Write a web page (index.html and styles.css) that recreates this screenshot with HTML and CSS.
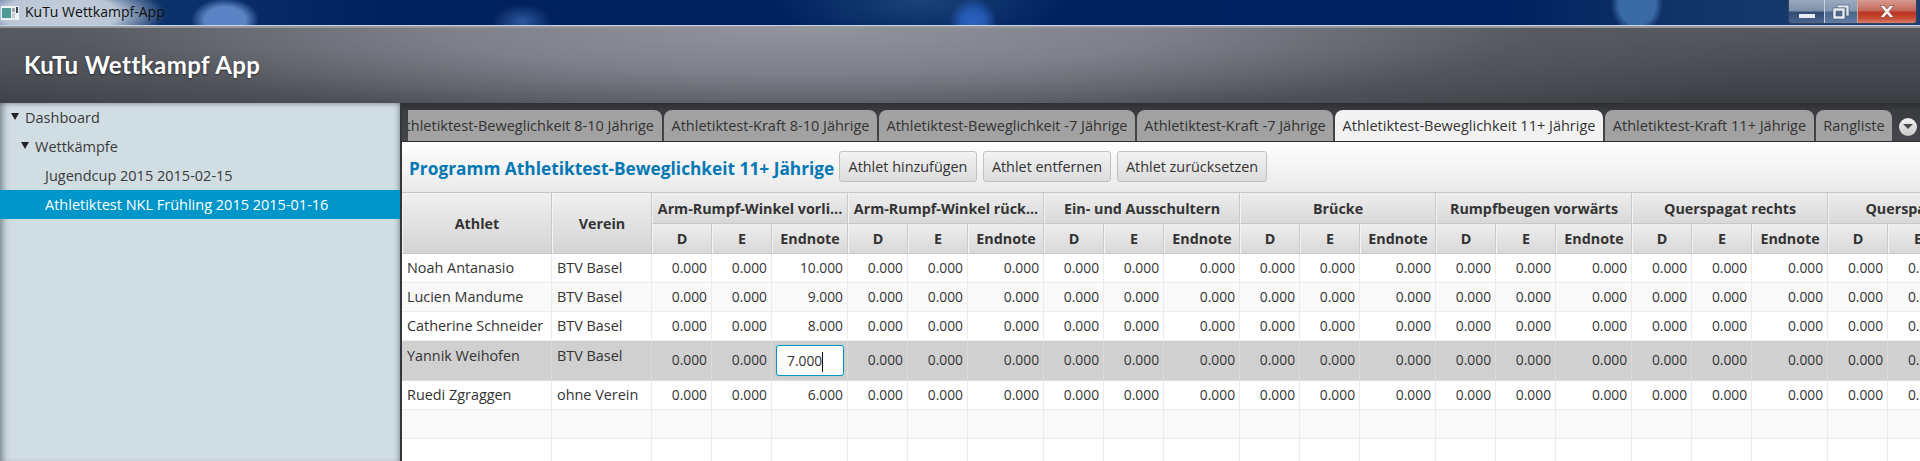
FILE: index.html
```html
<!DOCTYPE html>
<html>

<head>
	<meta charset="utf-8">
	<title>KuTu Wettkampf-App</title>
	<link rel="stylesheet" href="styles.css">
</head>

<body>
	<div class="titleBar">
		<svg class="appIcon" width="18" height="14" viewBox="0 0 18 14">
			<rect width="18" height="14" fill="#eef2f4" />
			<rect x="1" y="2" width="9" height="10" fill="#4f9a96" />
			<rect x="11" y="2" width="3" height="4" fill="#9aa6ae" />
			<rect x="11" y="7" width="3" height="5" fill="#c4ccd0" />
			<rect x="15" y="1" width="2" height="6" fill="#3c4a56" />
		</svg>
		<span class="windowTitle">KuTu Wettkampf-App</span>
		<div class="windowButtons">
			<div class="winBtn minBtn"><span class="minBar"></span></div>
			<div class="winBtn restoreBtn">
				<svg width="18" height="16" viewBox="0 0 18 16">
					<path d="M5 1h12v11h-3v-8h-9z" fill="#dfe6ee" stroke="#47586e" stroke-width="0.6" />
					<path d="M1 4h12v11h-12z M4 7v5h6v-5z" fill="#e8edf3" fill-rule="evenodd" stroke="#47586e" stroke-width="0.6" />
				</svg>
			</div>
			<div class="winBtn closeBtn">
				<svg width="16" height="13" viewBox="0 0 16 13">
					<path d="M1 0.5h4l3 3.5 3-3.5h4l-5 6 5 6h-4l-3-3.5-3 3.5h-4l5-6z" fill="#f2f2f2" stroke="#6d2a22" stroke-width="0.5" />
				</svg>
			</div>
		</div>
	</div>

	<div class="appHeader">
		<h1 class="appName">KuTu Wettkampf App</h1>
	</div>

	<div class="mainArea">
		<div class="sideTree">
			<div class="treeRow level0"><span class="treeArrow"></span>Dashboard</div>
			<div class="treeRow level1"><span class="treeArrow"></span>Wettkämpfe</div>
			<div class="treeRow level2">Jugendcup 2015 2015-02-15</div>
			<div class="treeRow level2 selected">Athletiktest NKL Frühling 2015 2015-01-16</div>
		</div>

		<div class="content">
			<div class="tabStrip">
				<div class="tab tabClipped"><span>Athletiktest-Beweglichkeit 8-10 Jährige</span></div>
				<div class="tab tabB"><span>Athletiktest-Kraft 8-10 Jährige</span></div>
				<div class="tab tabC"><span>Athletiktest-Beweglichkeit -7 Jährige</span></div>
				<div class="tab tabD"><span>Athletiktest-Kraft -7 Jährige</span></div>
				<div class="tab tabE active"><span>Athletiktest-Beweglichkeit 11+ Jährige</span></div>
				<div class="tab tabF"><span>Athletiktest-Kraft 11+ Jährige</span></div>
				<div class="tab tabG"><span>Rangliste</span></div>
				<div class="tabMenu"><span class="tabMenuArrow"></span></div>
			</div>

			<div class="toolBar">
				<h2 class="programTitle">Programm Athletiktest-Beweglichkeit 11+ Jährige</h2>
				<button class="toolButton btnAdd">Athlet hinzufügen</button>
				<button class="toolButton btnRemove">Athlet entfernen</button>
				<button class="toolButton btnReset">Athlet zurücksetzen</button>
			</div>

			<div class="tableWrap">
				<table class="scoreTable">
					<colgroup>
						<col class="colName"><col class="colClub">
						<col class="colNum"><col class="colNum"><col class="colEnd">
						<col class="colNum"><col class="colNum"><col class="colEnd">
						<col class="colNum"><col class="colNum"><col class="colEnd">
						<col class="colNum"><col class="colNum"><col class="colEnd">
						<col class="colNum"><col class="colNum"><col class="colEnd">
						<col class="colNum"><col class="colNum"><col class="colEnd">
						<col class="colNum"><col class="colNum"><col class="colEnd">
					</colgroup>
					<thead>
						<tr class="groupRow">
							<th rowspan="2">Athlet</th>
							<th rowspan="2">Verein</th>
							<th colspan="3">Arm-Rumpf-Winkel vorli...</th>
							<th colspan="3">Arm-Rumpf-Winkel rück...</th>
							<th colspan="3">Ein- und Ausschultern</th>
							<th colspan="3">Brücke</th>
							<th colspan="3">Rumpfbeugen vorwärts</th>
							<th colspan="3">Querspagat rechts</th>
							<th colspan="3">Querspagat links</th>
						</tr>
						<tr class="subRow">
							<th>D</th><th>E</th><th>Endnote</th>
							<th>D</th><th>E</th><th>Endnote</th>
							<th>D</th><th>E</th><th>Endnote</th>
							<th>D</th><th>E</th><th>Endnote</th>
							<th>D</th><th>E</th><th>Endnote</th>
							<th>D</th><th>E</th><th>Endnote</th>
							<th>D</th><th>E</th><th>Endnote</th>
						</tr>
					</thead>
					<tbody>
						<tr>
							<td class="txt">Noah Antanasio</td><td class="txt">BTV Basel</td>
							<td>0.000</td><td>0.000</td><td>10.000</td>
							<td>0.000</td><td>0.000</td><td>0.000</td>
							<td>0.000</td><td>0.000</td><td>0.000</td>
							<td>0.000</td><td>0.000</td><td>0.000</td>
							<td>0.000</td><td>0.000</td><td>0.000</td>
							<td>0.000</td><td>0.000</td><td>0.000</td>
							<td>0.000</td><td>0.000</td><td>0.000</td>
						</tr>
						<tr class="odd">
							<td class="txt">Lucien Mandume</td><td class="txt">BTV Basel</td>
							<td>0.000</td><td>0.000</td><td>9.000</td>
							<td>0.000</td><td>0.000</td><td>0.000</td>
							<td>0.000</td><td>0.000</td><td>0.000</td>
							<td>0.000</td><td>0.000</td><td>0.000</td>
							<td>0.000</td><td>0.000</td><td>0.000</td>
							<td>0.000</td><td>0.000</td><td>0.000</td>
							<td>0.000</td><td>0.000</td><td>0.000</td>
						</tr>
						<tr>
							<td class="txt">Catherine Schneider</td><td class="txt">BTV Basel</td>
							<td>0.000</td><td>0.000</td><td>8.000</td>
							<td>0.000</td><td>0.000</td><td>0.000</td>
							<td>0.000</td><td>0.000</td><td>0.000</td>
							<td>0.000</td><td>0.000</td><td>0.000</td>
							<td>0.000</td><td>0.000</td><td>0.000</td>
							<td>0.000</td><td>0.000</td><td>0.000</td>
							<td>0.000</td><td>0.000</td><td>0.000</td>
						</tr>
						<tr class="editing">
							<td class="txt">Yannik Weihofen</td><td class="txt">BTV Basel</td>
							<td>0.000</td><td>0.000</td><td class="editCell"><div class="editBox">7.000<span class="caret"></span></div></td>
							<td>0.000</td><td>0.000</td><td>0.000</td>
							<td>0.000</td><td>0.000</td><td>0.000</td>
							<td>0.000</td><td>0.000</td><td>0.000</td>
							<td>0.000</td><td>0.000</td><td>0.000</td>
							<td>0.000</td><td>0.000</td><td>0.000</td>
							<td>0.000</td><td>0.000</td><td>0.000</td>
						</tr>
						<tr>
							<td class="txt">Ruedi Zgraggen</td><td class="txt">ohne Verein</td>
							<td>0.000</td><td>0.000</td><td>6.000</td>
							<td>0.000</td><td>0.000</td><td>0.000</td>
							<td>0.000</td><td>0.000</td><td>0.000</td>
							<td>0.000</td><td>0.000</td><td>0.000</td>
							<td>0.000</td><td>0.000</td><td>0.000</td>
							<td>0.000</td><td>0.000</td><td>0.000</td>
							<td>0.000</td><td>0.000</td><td>0.000</td>
						</tr>
						<tr class="odd">
							<td></td><td></td><td></td><td></td><td></td><td></td><td></td><td></td><td></td><td></td><td></td><td></td>
							<td></td><td></td><td></td><td></td><td></td><td></td><td></td><td></td><td></td><td></td><td></td>
						</tr>
						<tr>
							<td></td><td></td><td></td><td></td><td></td><td></td><td></td><td></td><td></td><td></td><td></td><td></td>
							<td></td><td></td><td></td><td></td><td></td><td></td><td></td><td></td><td></td><td></td><td></td>
						</tr>
					</tbody>
				</table>
			</div>
		</div>
	</div>
</body>

</html>
```

FILE: styles.css
```css
* {
	box-sizing: border-box;
}

html,
body {
	margin: 0;
	height: 461px;
	overflow: hidden;
}

body {
	display: flex;
	flex-direction: column;
	width: 1920px;
	background-color: #3c3e44;
	font-family: "Open Sans", "Noto Sans", sans-serif;
	font-size: 14.5px;
	color: #333333;
}

/* window frame */
.titleBar {
	display: flex;
	align-items: center;
	height: 26px;
	flex: none;
	padding: 0 0 2px 1px;
	border-bottom: 1px solid #c9d6e6;
	background:
		radial-gradient(ellipse 105px 34px at 60px 14px, #c5cfdc 0%, #bac6d6 55%, rgba(186, 198, 214, 0) 100%),
		radial-gradient(ellipse 34px 22px at 225px 20px, #5a84c4 0%, #5a84c4 60%, rgba(90, 132, 196, 0) 100%),
		radial-gradient(ellipse 30px 18px at 522px 22px, #2e5a9e 0%, rgba(46, 90, 158, 0) 100%),
		radial-gradient(ellipse 24px 24px at 973px 22px, #2c62c0 0%, #2458b0 50%, rgba(36, 88, 176, 0) 100%),
		radial-gradient(ellipse 150px 50px at 920px 0, #1a4378 0%, rgba(26, 67, 120, 0) 100%),
		radial-gradient(ellipse 26px 30px at 1637px 4px, #3a6aa6 0%, #3a6aa6 70%, rgba(58, 106, 166, 0) 100%),
		linear-gradient(to right, #143d75 0, #00215c 400px, #002160 1500px, #123569 1700px, #1c3f70 1920px);
}

.appIcon {
	flex: none;
	margin-top: 2px;
}

.windowTitle {
	margin-left: 6px;
	font-size: 14px;
	color: #101010;
}

.windowButtons {
	display: flex;
	height: 24px;
	margin-left: auto;
	margin-right: 3px;
	align-self: flex-start;
	border: 1px solid #33435c;
	border-top: 0;
	border-radius: 0 0 4px 4px;
	overflow: hidden;
}

.winBtn {
	display: flex;
	align-items: center;
	justify-content: center;
	height: 100%;
}

.minBtn {
	width: 36px;
	border-right: 1px solid #c4d0de;
	background: linear-gradient(to bottom, #9aa9bf 0, #7f92ad 45%, #314a72 55%, #4a6690 100%);
}

.minBar {
	display: block;
	width: 16px;
	height: 4px;
	margin-top: 8px;
	background-color: #e8edf3;
}

.restoreBtn {
	width: 33px;
	border-right: 1px solid #c4a8a4;
	background: linear-gradient(to bottom, #9aa9bf 0, #8598b3 45%, #4b658b 55%, #617ea6 100%);
}

.closeBtn {
	width: 58px;
	background: linear-gradient(to bottom, #d89a90 0, #c46a5c 45%, #bb3420 55%, #c84c36 80%, #d4806e 100%);
}

/* app header */
.appHeader {
	flex: none;
	display: flex;
	align-items: center;
	height: 77px;
	padding: 0 0 2px 24px;
	border-top: 2px solid #96979c;
	background:
		radial-gradient(ellipse 1050px 130px at 800px 0, #92959d 0%, #7d8089 35%, rgba(90, 92, 100, 0.6) 70%, rgba(60, 62, 68, 0) 100%),
		linear-gradient(to bottom, #55575e 0, #3c3e43 100%);
}

.appName {
	margin: 0;
	font-family: "Lato", sans-serif;
	font-size: 24px;
	font-weight: 700;
	letter-spacing: 0.45px;
	color: #ffffff;
	text-shadow: 0 1px 2px rgba(0, 0, 0, 0.5);
}

.mainArea {
	flex: 1;
	display: flex;
	min-height: 0;
}

/* navigation tree */
.sideTree {
	flex: none;
	width: 400px;
	background-color: #d0dde3;
	box-shadow: inset 7px 0 6px -4px rgba(60, 70, 80, 0.55), inset -5px 0 5px -4px rgba(60, 70, 80, 0.5), inset 0 5px 5px -4px rgba(60, 70, 80, 0.4);
}

.treeRow {
	display: flex;
	align-items: center;
	height: 29px;
	white-space: nowrap;
	color: #3a3a3a;
}

.level0 {
	padding-left: 11px;
}

.level1 {
	padding-left: 21px;
}

.level2 {
	padding-left: 45px;
}

.treeRow.selected {
	background-color: #0096c9;
	color: #ffffff;
}

.treeArrow {
	width: 0;
	height: 0;
	margin-right: 6px;
	margin-top: -3px;
	border-left: 4.5px solid transparent;
	border-right: 4.5px solid transparent;
	border-top: 7px solid #222222;
}

/* right side */
.content {
	flex: 1;
	min-width: 0;
	display: flex;
	flex-direction: column;
	border-left: 2px solid #34363a;
	overflow: hidden;
}

.tabStrip {
	flex: none;
	display: flex;
	gap: 2px;
	align-items: flex-end;
	height: 39px;
	padding-left: 6px;
	border-bottom: 1px solid #2c2d30;
	background: linear-gradient(to bottom, #2e2f33 0, #3a3c42 8px, #44464c 100%);
}

.tab {
	display: flex;
	align-items: center;
	flex: none;
	height: 31px;
	padding-bottom: 1px;
	overflow: hidden;
	white-space: nowrap;
	border-radius: 0 8px 0 0;
	background-color: #a2a2a2;
	color: #333333;
	justify-content: center;
}

.tab+.tab {
	border-radius: 8px 8px 0 0;
}

.tabClipped {
	width: 254px;
	justify-content: flex-end;
	padding-right: 8px;
}

.tabB {
	width: 213px;
}

.tabC {
	width: 256px;
}

.tabD {
	width: 196px;
}

.tabE {
	width: 268px;
}

.tabF {
	width: 209px;
}

.tabG {
	width: 76px;
}

.tab.active {
	background-color: #f2f2f2;
}

.tabMenu {
	display: flex;
	align-items: center;
	justify-content: center;
	align-self: center;
	flex: none;
	width: 18px;
	height: 18px;
	margin-left: 5px;
	margin-top: 9px;
	border-radius: 50%;
	background: linear-gradient(to bottom, #f4f4f4, #c8c8c8);
}

.tabMenuArrow {
	width: 0;
	height: 0;
	border-left: 5px solid transparent;
	border-right: 5px solid transparent;
	border-top: 5px solid #4a4a4a;
}

.toolBar {
	flex: none;
	display: flex;
	align-items: center;
	gap: 6px;
	height: 51px;
	padding: 0 0 0 7px;
	border-bottom: 1px solid #c6c6c6;
	background: linear-gradient(to bottom, #ffffff 0, #e9e9e9 100%);
}

.programTitle {
	margin: 3px 0 0 0;
	width: 424px;
	flex: none;
	font-size: 17.3px;
	font-weight: 700;
	white-space: nowrap;
	color: #0578b4;
}

.toolButton {
	height: 31px;
	padding: 0;
	margin-bottom: 2px;
	border: 1px solid #c2c2c2;
	border-radius: 3px;
	background: linear-gradient(to bottom, #f2f2f2, #dcdcdc);
	font-family: inherit;
	font-size: 14.4px;
	color: #333333;
}

.btnAdd {
	width: 138px;
}

.btnRemove {
	width: 128px;
}

.btnReset {
	width: 150px;
}

/* score table */
.tableWrap {
	flex: 1;
	min-height: 0;
	overflow: hidden;
	background-color: #ffffff;
}

.scoreTable {
	table-layout: fixed;
	width: 1622px;
	border-collapse: separate;
	border-spacing: 0;
}

.colName {
	width: 150px;
}

.colClub {
	width: 100px;
}

.colNum {
	width: 60px;
}

.colEnd {
	width: 76px;
}

.scoreTable th {
	padding: 0;
	border-right: 1px solid #c8c8c8;
	border-bottom: 1px solid #c8c8c8;
	border-left: 1px solid #f4f4f4;
	background: linear-gradient(to bottom, #eeeeee, #d8d8d8);
	font-size: 14.3px;
	font-weight: 700;
	white-space: nowrap;
	color: #333333;
	overflow: hidden;
}

.groupRow {
	height: 31px;
}

.subRow {
	height: 30px;
}

.scoreTable th[rowspan] {
	background: linear-gradient(to bottom, #f0f0f0, #d4d4d4);
}

.scoreTable tbody tr {
	height: 29px;
}

.scoreTable td {
	padding: 0 4px 1px 0;
	border-right: 1px solid #ececec;
	border-bottom: 1px solid #ececec;
	font-size: 13.8px;
	text-align: right;
	white-space: nowrap;
	overflow: hidden;
}

.scoreTable td.txt {
	padding-left: 5px;
	padding-right: 0;
	font-size: 14.4px;
	text-align: left;
}

.scoreTable tr.odd td {
	background-color: #f9f9f9;
}

.scoreTable tr.editing {
	height: 40px;
}

.scoreTable tr.editing td {
	padding-bottom: 3px;
	background-color: #d0d0d0;
	border-color: #dadada;
}

.scoreTable tr.editing td.txt {
	vertical-align: top;
	padding-top: 5px;
}

.scoreTable tr.editing td.editCell {
	padding: 0 3px 0 4px;
}

.editBox {
	height: 31px;
	padding: 0 0 0 10px;
	line-height: 29px;
	text-align: left;
	border: 1px solid #0096c9;
	border-radius: 3px;
	background-color: #ffffff;
	box-shadow: 0 0 1px #6cc4e4;
}

.caret {
	display: inline-block;
	width: 1px;
	height: 20px;
	vertical-align: middle;
	background-color: #111111;
}
```
